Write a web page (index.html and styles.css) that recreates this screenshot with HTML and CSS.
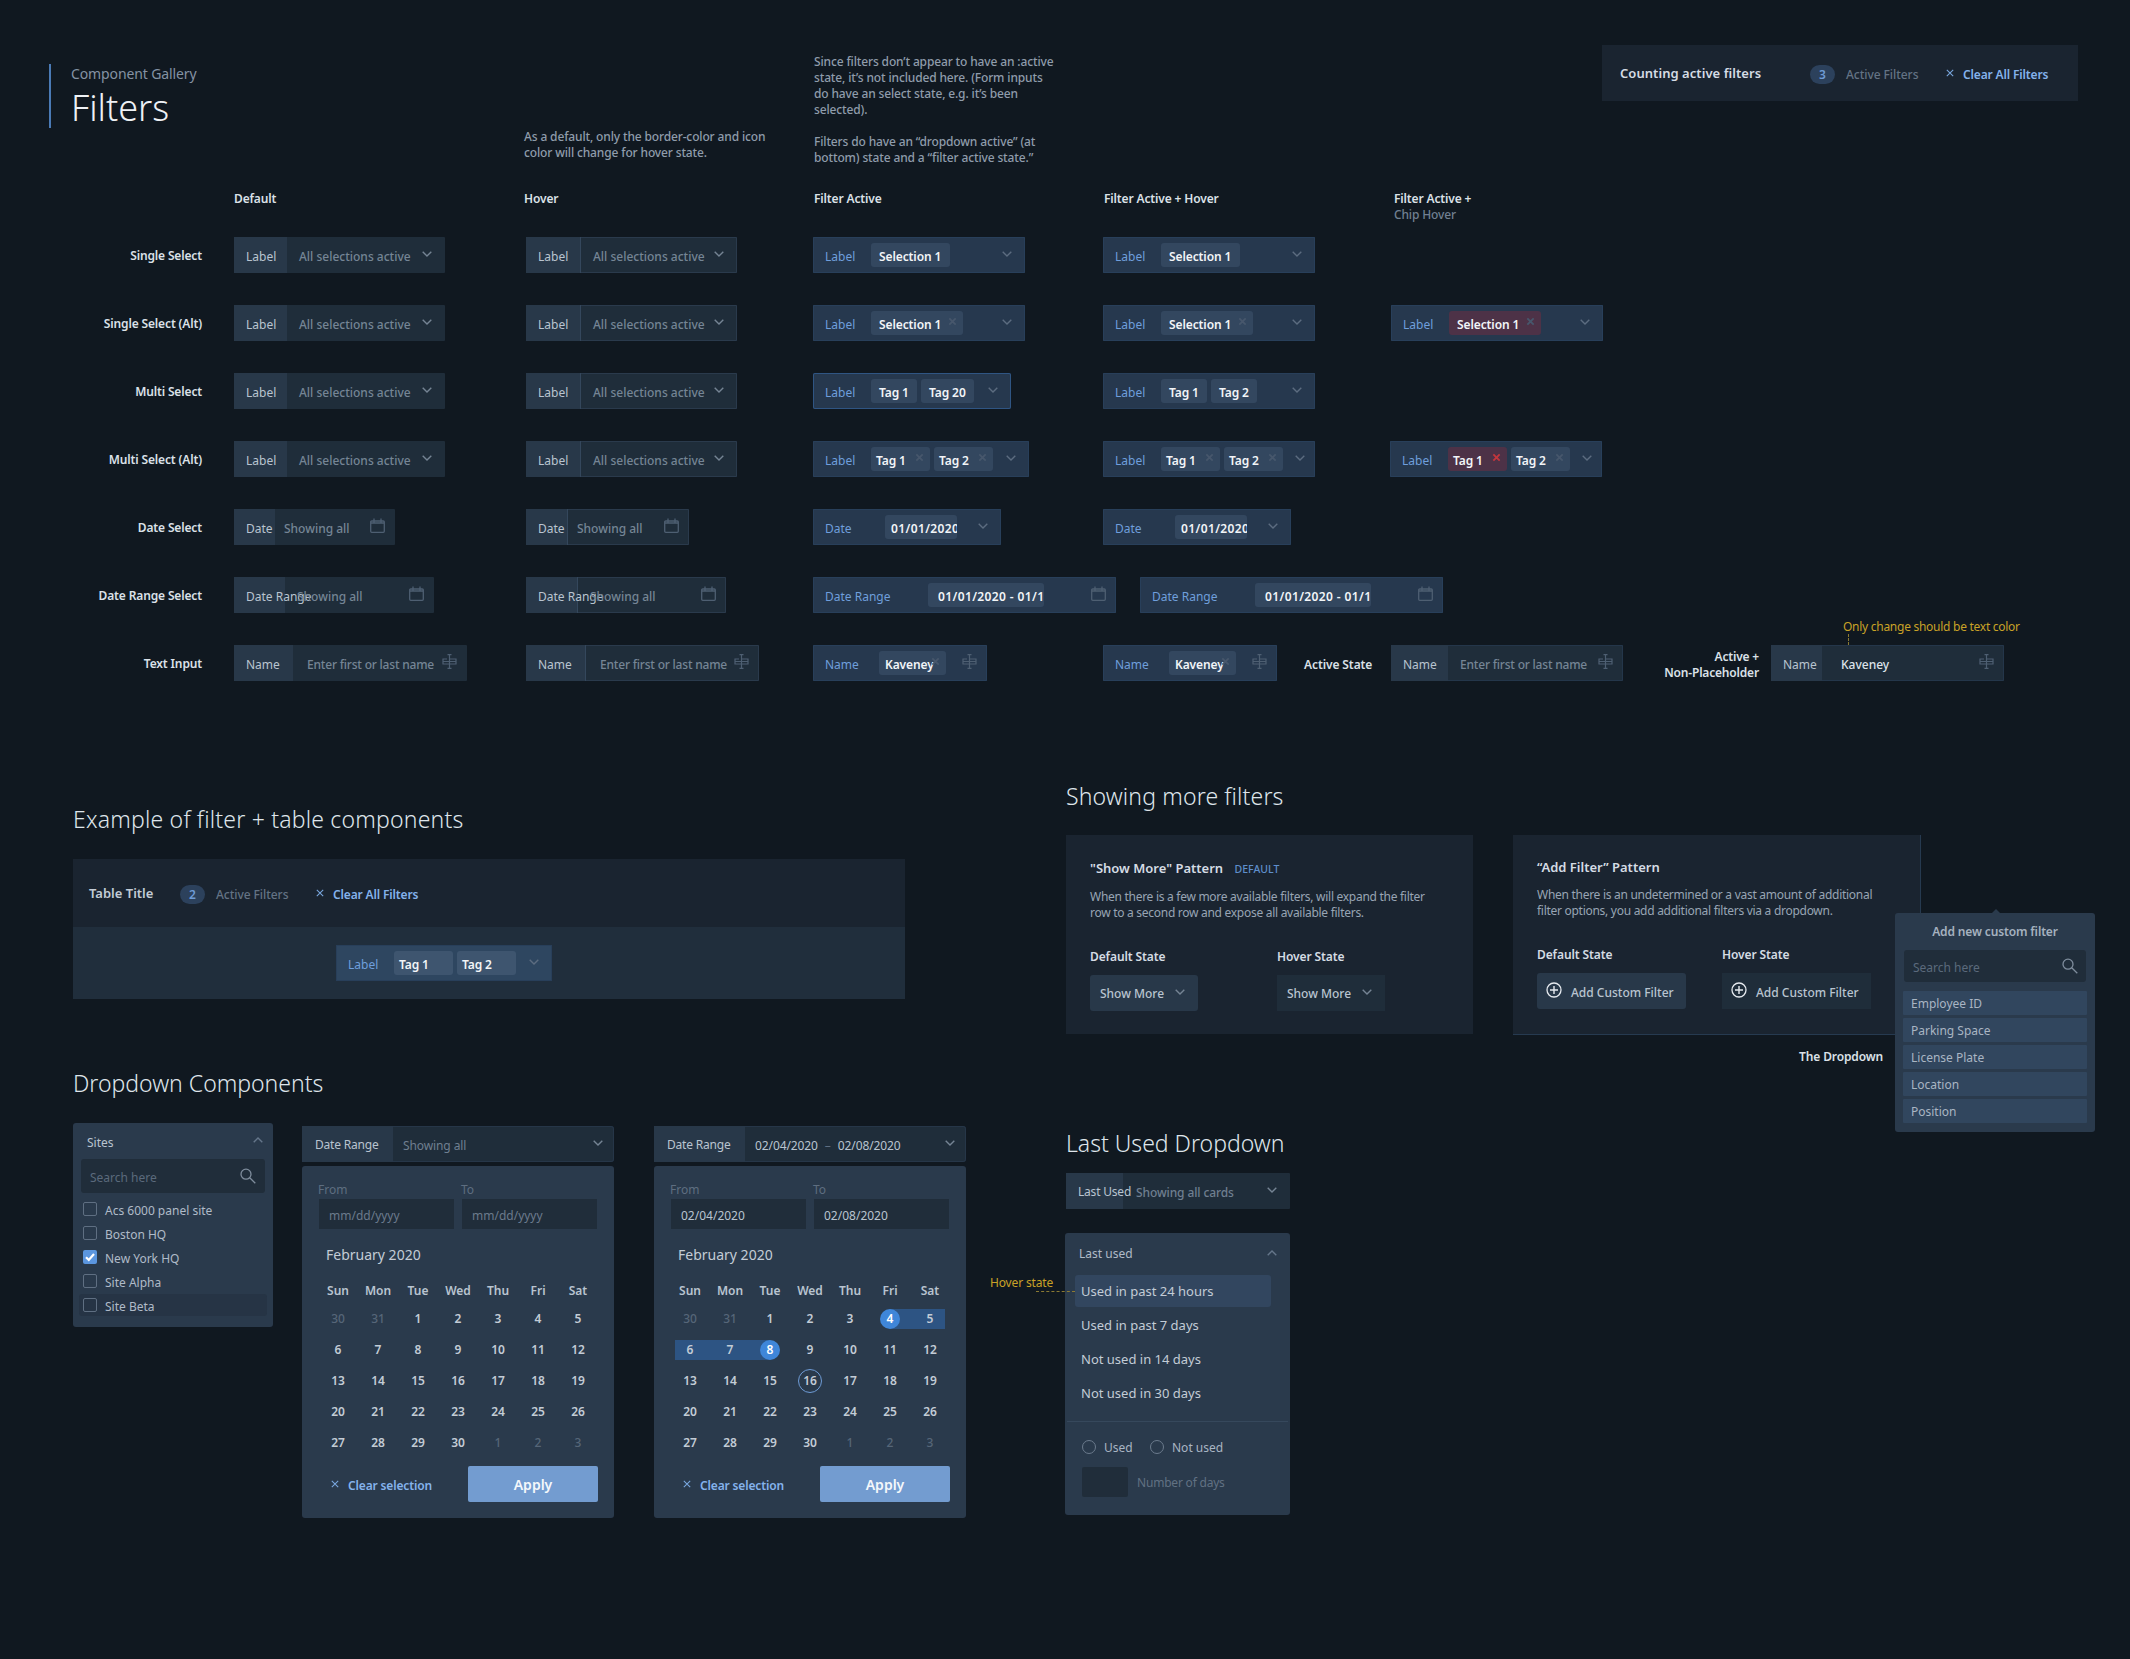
FILE: index.html
```html
<!DOCTYPE html>
<html lang="en">
<head>
    <meta charset="UTF-8">
    <title>Component Gallery - Filters</title>
    <link rel="stylesheet" href="styles.css">
</head>
<body>
<svg class="sprite" width="0" height="0">
    <symbol id="chev" viewBox="0 0 10 6"><path d="M.7.7 5 5 9.3.7" fill="none" stroke="currentColor" stroke-width="1.4"/></symbol>
    <symbol id="cal" viewBox="0 0 15 15"><path d="M1.7 3h11.6a1 1 0 0 1 1 1v9.3a1 1 0 0 1-1 1H1.7a1 1 0 0 1-1-1V4a1 1 0 0 1 1-1ZM4 .5V5M11 .5V5M.7 5h13.6" fill="none" stroke="currentColor" stroke-width="1.3"/></symbol>
    <symbol id="cursor" viewBox="0 0 15 15"><path d="M5 5h-4v5h13V5H8M7.5.7v13.6M5.5.7h4M5.5 14.3h4M1 7.5h13" fill="none" stroke="currentColor" stroke-width="1.2"/></symbol>
    <symbol id="x" viewBox="0 0 10 10"><path d="M1 1l8 8M9 1l-8 8" fill="none" stroke="currentColor" stroke-width="1.3"/></symbol>
    <symbol id="xbold" viewBox="0 0 10 10"><path d="M1.5 1.5l7 7M8.5 1.5l-7 7" fill="none" stroke="currentColor" stroke-width="2"/></symbol>
    <symbol id="search" viewBox="0 0 16 16"><path d="M10 10l5.3 5.3M11 6.2a5 5 0 1 1-10 0 5 5 0 0 1 10 0Z" fill="none" stroke="currentColor" stroke-width="1.3"/></symbol>
    <symbol id="plus" viewBox="0 0 16 16"><circle cx="8" cy="8" r="7" fill="none" stroke="currentColor" stroke-width="1.3"/><path d="M8 4v8M4 8h8" fill="none" stroke="currentColor" stroke-width="1.4"/></symbol>
    <symbol id="check" viewBox="0 0 12 12"><path d="M2 6.2 4.8 9 10 3" fill="none" stroke="currentColor" stroke-width="2.2"/></symbol>
</svg>

<div class="page">
    <!-- state matrix -->
    <div class="matrix">
        <div class="title-block">
            <div class="gallery-name">Component Gallery</div>
            <h1>Filters</h1>
        </div>
        <p class="note note-hover">As a default, only the border-color and icon<br>color will change for hover state.</p>
        <p class="note note-active">Since filters don’t appear to have an :active<br>state, it’s not included here. (Form inputs<br>do have an select state, e.g. it’s been<br>selected).<br><br>Filters do have an “dropdown active” (at<br>bottom) state and a “filter active state.”</p>
        <div class="count-panel">
            <span class="count-title">Counting active filters</span>
            <span class="badge">3</span>
            <span class="count-text">Active Filters</span>
            <span class="clear-link"><svg class="ico-x"><use href="#x"/></svg>Clear All Filters</span>
        </div>

        <div class="col-head first">Default</div>
        <div class="col-head h-hover">Hover</div>
        <div class="col-head h-active">Filter Active</div>
        <div class="col-head h-active">Filter Active + Hover</div>
        <div class="col-head h-chip">Filter Active +<br><span class="muted">Chip Hover</span></div>

        <div class="row-label">Single Select</div>
        <div class="filter w211"><span class="f-label">Label</span><span class="f-value">All selections active</span><svg class="chev"><use href="#chev"/></svg></div>
        <div class="filter w211 hover"><span class="f-label">Label</span><span class="f-value">All selections active</span><svg class="chev"><use href="#chev"/></svg></div>
        <div class="filter w212 active"><span class="f-label">Label</span><span class="chip p8 w79">Selection 1</span><svg class="chev"><use href="#chev"/></svg></div>
        <div class="filter w212 active"><span class="f-label">Label</span><span class="chip p8 w79">Selection 1</span><svg class="chev"><use href="#chev"/></svg></div>

        <div class="row-label">Single Select (Alt)</div>
        <div class="filter w211"><span class="f-label">Label</span><span class="f-value">All selections active</span><svg class="chev"><use href="#chev"/></svg></div>
        <div class="filter w211 hover"><span class="f-label">Label</span><span class="f-value">All selections active</span><svg class="chev"><use href="#chev"/></svg></div>
        <div class="filter w212 active"><span class="f-label">Label</span><span class="chip p8 w92">Selection 1<svg class="chip-x"><use href="#xbold"/></svg></span><svg class="chev"><use href="#chev"/></svg></div>
        <div class="filter w212 active"><span class="f-label">Label</span><span class="chip p8 w92">Selection 1<svg class="chip-x"><use href="#xbold"/></svg></span><svg class="chev"><use href="#chev"/></svg></div>
        <div class="filter w212 active"><span class="f-label">Label</span><span class="chip p8 w92 danger">Selection 1<svg class="chip-x"><use href="#xbold"/></svg></span><svg class="chev"><use href="#chev"/></svg></div>

        <div class="row-label">Multi Select</div>
        <div class="filter w211"><span class="f-label">Label</span><span class="f-value">All selections active</span><svg class="chev"><use href="#chev"/></svg></div>
        <div class="filter w211 hover"><span class="f-label">Label</span><span class="f-value">All selections active</span><svg class="chev"><use href="#chev"/></svg></div>
        <div class="filter w198 active outlined"><span class="f-label">Label</span><span class="chip p8 w46">Tag 1</span><span class="chip p8 w53">Tag 20</span><svg class="chev"><use href="#chev"/></svg></div>
        <div class="filter w212 active"><span class="f-label">Label</span><span class="chip p8 w46">Tag 1</span><span class="chip p8 w46">Tag 2</span><svg class="chev"><use href="#chev"/></svg></div>

        <div class="row-label">Multi Select (Alt)</div>
        <div class="filter w211"><span class="f-label">Label</span><span class="f-value">All selections active</span><svg class="chev"><use href="#chev"/></svg></div>
        <div class="filter w211 hover"><span class="f-label">Label</span><span class="f-value">All selections active</span><svg class="chev"><use href="#chev"/></svg></div>
        <div class="filter w216 active"><span class="f-label">Label</span><span class="chip p5 w59">Tag 1<svg class="chip-x"><use href="#xbold"/></svg></span><span class="chip p5 w59">Tag 2<svg class="chip-x"><use href="#xbold"/></svg></span><svg class="chev"><use href="#chev"/></svg></div>
        <div class="filter w212 active"><span class="f-label">Label</span><span class="chip p5 w59">Tag 1<svg class="chip-x"><use href="#xbold"/></svg></span><span class="chip p5 w59">Tag 2<svg class="chip-x"><use href="#xbold"/></svg></span><svg class="chev near"><use href="#chev"/></svg></div>
        <div class="filter w212 active shift"><span class="f-label">Label</span><span class="chip p5 w59 danger">Tag 1<svg class="chip-x red"><use href="#xbold"/></svg></span><span class="chip p5 w59">Tag 2<svg class="chip-x"><use href="#xbold"/></svg></span><svg class="chev near"><use href="#chev"/></svg></div>

        <div class="row-label">Date Select</div>
        <div class="filter w161 date"><span class="f-label">Date</span><span class="f-value">Showing all</span><svg class="ico-cal"><use href="#cal"/></svg></div>
        <div class="filter w163 date hover"><span class="f-label">Date</span><span class="f-value">Showing all</span><svg class="ico-cal"><use href="#cal"/></svg></div>
        <div class="filter w188 date active"><span class="f-label">Date</span><span class="chip p6 w72">01/01/2020</span><svg class="chev"><use href="#chev"/></svg></div>
        <div class="filter w188 date active"><span class="f-label">Date</span><span class="chip p6 w72">01/01/2020</span><svg class="chev"><use href="#chev"/></svg></div>

        <div class="row-label">Date Range Select</div>
        <div class="filter w200 range"><span class="f-label">Date Range</span><span class="f-value">Showing all</span><svg class="ico-cal"><use href="#cal"/></svg></div>
        <div class="filter w200 range hover"><span class="f-label">Date Range</span><span class="f-value">Showing all</span><svg class="ico-cal"><use href="#cal"/></svg></div>
        <div class="filter w303 range active"><span class="f-label">Date Range</span><span class="chip p10 w116">01/01/2020 - 01/14/2020</span><svg class="ico-cal"><use href="#cal"/></svg></div>
        <div class="filter w303 range active push"><span class="f-label">Date Range</span><span class="chip p10 w116">01/01/2020 - 01/14/2020</span><svg class="ico-cal"><use href="#cal"/></svg></div>

        <div class="row-label">Text Input</div>
        <div class="filter w233 text"><span class="f-label">Name</span><span class="f-value">Enter first or last name</span><svg class="ico-cursor"><use href="#cursor"/></svg></div>
        <div class="filter w233 text hover"><span class="f-label">Name</span><span class="f-value">Enter first or last name</span><svg class="ico-cursor"><use href="#cursor"/></svg></div>
        <div class="filter w174 text active"><span class="f-label">Name</span><span class="chip p6 w67">Kaveney<svg class="chip-x"><use href="#xbold"/></svg></span><svg class="ico-cursor"><use href="#cursor"/></svg></div>
        <div class="state-cell">
            <div class="filter w174 text active"><span class="f-label">Name</span><span class="chip p6 w67">Kaveney<svg class="chip-x"><use href="#xbold"/></svg></span><svg class="ico-cursor"><use href="#cursor"/></svg></div>
            <span class="state-name">Active State</span>
        </div>
        <div class="filter w232 text focus"><span class="f-label">Name</span><span class="f-value">Enter first or last name</span><svg class="ico-cursor"><use href="#cursor"/></svg></div>
        <div class="state-cell">
            <span class="state-name wide">Active +<br>Non-Placeholder</span>
            <div class="filter w233 text focus filled">
                <span class="callout">Only change should be text color</span>
                <span class="f-label">Name</span><span class="f-value">Kaveney</span><svg class="ico-cursor"><use href="#cursor"/></svg>
            </div>
        </div>
    </div>

    <div class="lower">
        <div class="lower-left">
            <h2 class="first-left">Example of filter + table components</h2>
            <div class="table-demo">
                <div class="table-head">
                    <span class="table-title">Table Title</span>
                    <span class="badge">2</span>
                    <span class="count-text">Active Filters</span>
                    <span class="clear-link"><svg class="ico-x"><use href="#x"/></svg>Clear All Filters</span>
                </div>
                <div class="table-filters">
                    <div class="filter w216 active on-table"><span class="f-label">Label</span><span class="chip p5 w59">Tag 1</span><span class="chip p5 w59">Tag 2</span><svg class="chev"><use href="#chev"/></svg></div>
                </div>
            </div>

            <h2 class="second-left">Dropdown Components</h2>
            <div class="dropdowns">
                <div class="sites">
                    <div class="sites-head"><span>Sites</span><svg class="chev up"><use href="#chev"/></svg></div>
                    <div class="search-box"><span>Search here</span><svg class="ico-search"><use href="#search"/></svg></div>
                    <div class="site-row"><span class="checkbox"></span>Acs 6000 panel site</div>
                    <div class="site-row"><span class="checkbox"></span>Boston HQ</div>
                    <div class="site-row"><span class="checkbox checked"><svg><use href="#check"/></svg></span>New York HQ</div>
                    <div class="site-row"><span class="checkbox"></span>Site Alpha</div>
                    <div class="site-row over"><span class="checkbox"></span>Site Beta</div>
                </div>

                <div class="date-drop">
                    <div class="trigger"><span class="trigger-label">Date Range</span><span class="trigger-value">Showing all</span><svg class="chev"><use href="#chev"/></svg></div>
                    <div class="calendar">
                        <div class="range-inputs">
                            <div class="range-field"><label>From</label><div class="date-input">mm/dd/yyyy</div></div>
                            <div class="range-field"><label>To</label><div class="date-input">mm/dd/yyyy</div></div>
                        </div>
                        <div class="month">February 2020</div>
                        <div class="days">
                            <b>Sun</b><b>Mon</b><b>Tue</b><b>Wed</b><b>Thu</b><b>Fri</b><b>Sat</b>
                            <span class="off">30</span><span class="off">31</span><span>1</span><span>2</span><span>3</span><span>4</span><span>5</span>
                            <span>6</span><span>7</span><span>8</span><span>9</span><span>10</span><span>11</span><span>12</span>
                            <span>13</span><span>14</span><span>15</span><span>16</span><span>17</span><span>18</span><span>19</span>
                            <span>20</span><span>21</span><span>22</span><span>23</span><span>24</span><span>25</span><span>26</span>
                            <span>27</span><span>28</span><span>29</span><span>30</span><span class="off">1</span><span class="off">2</span><span class="off">3</span>
                        </div>
                        <div class="cal-foot">
                            <span class="clear-link"><svg class="ico-x"><use href="#x"/></svg>Clear selection</span>
                            <button class="apply">Apply</button>
                        </div>
                    </div>
                </div>

                <div class="date-drop">
                    <div class="trigger"><span class="trigger-label">Date Range</span><span class="trigger-value filled">02/04/2020<i>–</i>02/08/2020</span><svg class="chev"><use href="#chev"/></svg></div>
                    <div class="calendar">
                        <div class="range-inputs">
                            <div class="range-field"><label>From</label><div class="date-input filled">02/04/2020</div></div>
                            <div class="range-field"><label>To</label><div class="date-input filled">02/08/2020</div></div>
                        </div>
                        <div class="month">February 2020</div>
                        <div class="days">
                            <b>Sun</b><b>Mon</b><b>Tue</b><b>Wed</b><b>Thu</b><b>Fri</b><b>Sat</b>
                            <span class="off">30</span><span class="off">31</span><span>1</span><span>2</span><span>3</span><span class="from"><em>4</em></span><span class="band-end">5</span>
                            <span class="band-start">6</span><span class="band">7</span><span class="to"><em>8</em></span><span>9</span><span>10</span><span>11</span><span>12</span>
                            <span>13</span><span>14</span><span>15</span><span class="today"><em>16</em></span><span>17</span><span>18</span><span>19</span>
                            <span>20</span><span>21</span><span>22</span><span>23</span><span>24</span><span>25</span><span>26</span>
                            <span>27</span><span>28</span><span>29</span><span>30</span><span class="off">1</span><span class="off">2</span><span class="off">3</span>
                        </div>
                        <div class="cal-foot">
                            <span class="clear-link"><svg class="ico-x"><use href="#x"/></svg>Clear selection</span>
                            <button class="apply">Apply</button>
                        </div>
                    </div>
                </div>
            </div>
        </div>

        <div class="lower-right">
            <h2 class="more-title">Showing more filters</h2>
            <div class="pattern-row">
                <div class="pattern">
                    <h3>"Show More" Pattern <span class="tag-default">DEFAULT</span></h3>
                    <p>When there is a few more available filters, will expand the filter<br>row to a second row and expose all available filters.</p>
                    <div class="states">
                        <div class="state-col"><div class="state-title">Default State</div><div class="more-btn"><span>Show More</span><svg class="chev"><use href="#chev"/></svg></div></div>
                        <div class="state-col"><div class="state-title">Hover State</div><div class="more-btn square"><span>Show More</span><svg class="chev"><use href="#chev"/></svg></div></div>
                    </div>
                </div>
                <div class="pattern add">
                    <h3>“Add Filter” Pattern</h3>
                    <p>When there is an undetermined or a vast amount of additional<br>filter options, you add additional filters via a dropdown.</p>
                    <div class="states">
                        <div class="state-col"><div class="state-title">Default State</div><div class="add-btn"><svg class="ico-plus"><use href="#plus"/></svg>Add Custom Filter</div></div>
                        <div class="state-col"><div class="state-title">Hover State</div><div class="add-btn square"><svg class="ico-plus"><use href="#plus"/></svg>Add Custom Filter</div></div>
                    </div>
                    <span class="dropdown-name">The Dropdown</span>
                    <div class="add-menu">
                        <div class="add-menu-title">Add new custom filter</div>
                        <div class="search-box"><span>Search here</span><svg class="ico-search"><use href="#search"/></svg></div>
                        <div class="add-item">Employee ID</div>
                        <div class="add-item">Parking Space</div>
                        <div class="add-item">License Plate</div>
                        <div class="add-item">Location</div>
                        <div class="add-item">Position</div>
                    </div>
                </div>
            </div>

            <h2 class="last-used-title">Last Used Dropdown</h2>
            <div class="trigger last"><span class="trigger-label">Last Used</span><span class="trigger-value">Showing all cards</span><svg class="chev"><use href="#chev"/></svg></div>
            <div class="last-panel">
                <span class="hover-note">Hover state</span>
                <div class="last-head"><span>Last used</span><svg class="chev up"><use href="#chev"/></svg></div>
                <div class="last-item over">Used in past 24 hours</div>
                <div class="last-item">Used in past 7 days</div>
                <div class="last-item">Not used in 14 days</div>
                <div class="last-item">Not used in 30 days</div>
                <div class="last-foot">
                    <div class="radios">
                        <span class="radio"></span><span class="radio-text">Used</span>
                        <span class="radio"></span><span class="radio-text">Not used</span>
                    </div>
                    <div class="days-row"><span class="days-input"></span><span>Number of days</span></div>
                </div>
            </div>
        </div>
    </div>
</div>
</body>
</html>
```

FILE: styles.css
```css
* {
    box-sizing: border-box;
}

body {
    margin: 0;
    background-color: #101820;
    font-family: "Noto Sans", "Liberation Sans", sans-serif;
    font-size: 12px;
    color: #c3ccd6;
}

.sprite {
    position: absolute;
}

.page {
    width: 2130px;
    height: 1659px;
    padding-top: 45px;
    overflow: hidden;
}

/* matrix of states */
.matrix {
    display: grid;
    grid-template-columns: 234px 292px 287px 290px 288px 232px 1fr;
    grid-template-rows: 145px 47px;
    grid-auto-rows: 68px;
    align-items: start;
    justify-items: start;
}

.title-block {
    grid-column: 1 / 3;
    margin: 19px 0 0 49px;
    padding-left: 20px;
    height: 64px;
    border-left: 2px solid #4a7ab5;
}

.gallery-name {
    font-size: 14px;
    line-height: 20px;
    letter-spacing: -.12px;
    color: #8492a3;
}

h1 {
    margin: 3px 0 0;
    font-size: 36px;
    line-height: 42px;
    font-weight: 300;
    color: #eef1f5;
}

.note {
    margin: 0;
    font-size: 12px;
    line-height: 16px;
    font-weight: 500;
    letter-spacing: -.14px;
    color: #8f9cab;
    white-space: nowrap;
}

.note-hover {
    margin: 84px 0 0 -2px;
}

.note-active {
    margin: 9px 0 0 1px;
}

.count-panel {
    grid-column: 6 / 8;
    justify-self: end;
    margin-right: 52px;
    width: 476px;
    height: 56px;
    padding-left: 18px;
    display: flex;
    align-items: center;
    background-color: #1a2430;
}

.count-title {
    width: 190px;
    font-size: 13px;
    font-weight: 600;
    letter-spacing: .05px;
    color: #d5dce4;
    margin-top: -1px;
}

.badge {
    width: 25px;
    height: 19px;
    margin-top: 2px;
    border-radius: 10px;
    background-color: #2c415c;
    color: #6e9bd5;
    font-weight: 600;
    line-height: 19px;
    text-align: center;
}

.count-text {
    margin: 2px 0 0 11px;
    width: 100px;
    color: #647384;
    font-weight: 500;
    letter-spacing: -.05px;
    white-space: nowrap;
}

.clear-link {
    display: flex;
    align-items: center;
    margin-top: 2px;
    color: #85b3ec;
    font-weight: 600;
    letter-spacing: -.14px;
    white-space: nowrap;
}

.ico-x {
    width: 8px;
    height: 8px;
    margin: -2px 9px 0 0;
    color: #7aa8e0;
}

.col-head {
    margin-top: 1px;
    font-size: 12px;
    line-height: 16px;
    font-weight: 600;
    letter-spacing: -.14px;
    color: #dbe1e8;
    white-space: nowrap;
}

.col-head.first {
    grid-column: 2;
}

.h-hover { margin-left: -2px; }
.h-active { margin-left: 1px; }
.h-chip { margin-left: 3px; }

.muted {
    color: #718092;
    font-weight: 500;
}

.row-label {
    grid-column: 1;
    justify-self: end;
    height: 36px;
    margin-right: 32px;
    font-size: 12px;
    font-weight: 600;
    line-height: 38px;
    letter-spacing: -.14px;
    color: #dbe1e8;
    white-space: nowrap;
}

/* filter bar */
.filter {
    position: relative;
    display: flex;
    align-items: center;
    height: 36px;
    border-radius: 1px;
    background-color: #1f2d3a;
    white-space: nowrap;
}

.f-label {
    flex: none;
    width: 53px;
    height: 100%;
    padding: 3px 0 0 12px;
    line-height: 34px;
    background-color: #283849;
    color: #b9c4d0;
}

.f-value {
    flex: 1;
    padding: 3px 0 0 12px;
    color: #758595;
    font-weight: 500;
}

.date .f-label { width: 41px; }
.date .f-value { padding-left: 9px; }
.range .f-label { width: 51px; }
.text .f-label { width: 59px; }
.text .f-value {
    padding-left: 14px;
    letter-spacing: -.2px;
}

.hover {
    box-shadow: inset 0 0 0 1px #2a3a4c;
}

.hover .f-label {
    width: 55px;
    border-right: 1px solid #34475c;
}

.hover.date .f-label { width: 42px; }
.hover.range .f-label { width: 52px; }
.hover.text .f-label { width: 60px; }

.active {
    background-color: #26384e;
    box-shadow: inset 0 0 0 1px #283f5a;
}

.active.outlined {
    box-shadow: inset 0 0 0 1px #2f5583;
    border-radius: 2px;
}

.active .f-label {
    width: 58px;
    background: none;
    color: #6f9fdc;
}

.active.date .f-label { width: 72px; }
.active.range .f-label { width: 115px; }
.active.text .f-label { width: 66px; }

.focus {
    box-shadow: inset 0 0 0 1px #24364a;
}

.focus .f-label { width: 57px; }
.focus .f-value { padding-left: 12px; }

.filled .f-label { width: 51px; }
.filled .f-value {
    padding-left: 19px;
    letter-spacing: 0;
    color: #dde3ea;
}

.shift {
    margin-left: -1px;
}

.push {
    margin-left: 37px;
}

.chip {
    position: relative;
    flex: none;
    height: 24px;
    margin-right: 4px;
    border-radius: 3px;
    background-color: #33475f;
    color: #f2f5f8;
    font-weight: 600;
    letter-spacing: -.1px;
    line-height: 27px;
    overflow: hidden;
}

.date .chip,
.range .chip {
    letter-spacing: .38px;
}

.chip.danger {
    background-color: #4d3247;
}

.p5 { padding-left: 5px; }
.p6 { padding-left: 6px; }
.p8 { padding-left: 8px; }
.p10 { padding-left: 10px; }

.w46 { width: 46px; }
.w53 { width: 53px; }
.w59 { width: 59px; }
.w67 { width: 67px; }
.w72 { width: 72px; }
.w79 { width: 79px; }
.w92 { width: 92px; }
.w116 { width: 116px; }
.w161 { width: 161px; }
.w163 { width: 163px; }
.w174 { width: 174px; }
.w188 { width: 188px; }
.w198 { width: 198px; }
.w200 { width: 200px; }
.w211 { width: 211px; }
.w212 { width: 212px; }
.w216 { width: 216px; }
.w232 { width: 232px; }
.w233 { width: 233px; }
.w303 { width: 303px; }

.chip-x {
    position: absolute;
    top: 6px;
    right: 6px;
    width: 9px;
    height: 9px;
    color: #47576c;
}

.chip-x.red {
    color: #c2363d;
}

.chev {
    flex: none;
    width: 10px;
    height: 6px;
    margin: -2px 13px 0 auto;
    color: #758494;
}

.active .chev {
    color: #5c6c80;
}

.chev.near {
    margin-right: 10px;
}

.chev.up {
    transform: rotate(180deg);
}

.ico-cal {
    flex: none;
    width: 15px;
    height: 15px;
    margin: -3px 10px 0 auto;
    color: #4e5f72;
}

.ico-cursor {
    flex: none;
    width: 15px;
    height: 15px;
    margin: -3px 10px 0 auto;
    color: #4e5f72;
}

.state-cell {
    display: flex;
    align-items: center;
    height: 36px;
}

.state-name {
    margin: 2px 0 0 27px;
    font-weight: 600;
    letter-spacing: -.1px;
    color: #dbe1e8;
    white-space: nowrap;
}

.state-name.wide {
    width: 136px;
    margin: 3px 12px 0 0;
    line-height: 16px;
    letter-spacing: -.18px;
    text-align: right;
}

.callout {
    position: absolute;
    top: -26px;
    left: 72px;
    color: #c9a227;
    line-height: 16px;
    letter-spacing: -.27px;
}

.callout::after {
    content: "";
    position: absolute;
    left: 5px;
    top: 15px;
    height: 11px;
    border-left: 1px dashed #8b7a33;
}

/* lower half */
.lower {
    display: flex;
    margin-top: 68px;
    padding-left: 73px;
}

.lower-left {
    width: 993px;
    flex: none;
}

h2 {
    margin: 0;
    font-size: 23px;
    line-height: 30px;
    font-weight: 300;
    color: #dfe5eb;
}

.first-left {
    margin-top: 23px;
    letter-spacing: .2px;
}

.more-title {
    letter-spacing: .14px;
}

.second-left {
    margin-top: 69px;
}

.table-demo {
    margin-top: 25px;
    width: 832px;
}

.table-head {
    display: flex;
    align-items: center;
    height: 68px;
    padding-left: 16px;
    background-color: #1a2430;
}

.table-title {
    width: 91px;
    margin-top: -1px;
    font-size: 13px;
    font-weight: 600;
    color: #c3ccd6;
}

.table-head .count-text {
    width: 100px;
}

.table-filters {
    display: flex;
    align-items: center;
    height: 72px;
    padding-left: 263px;
    background-color: #202e3c;
}

.on-table {
    background-color: #2e4660;
}

.on-table .f-label {
    padding-left: 12px;
}

.on-table .chip {
    background-color: #3e556f;
}

.dropdowns {
    display: flex;
    align-items: flex-start;
    margin-top: 25px;
}

.sites {
    width: 200px;
    height: 204px;
    padding: 0 8px;
    border-radius: 3px;
    background-color: #2a3a4c;
    margin-right: 29px;
}

.sites-head {
    display: flex;
    align-items: center;
    height: 36px;
    padding: 2px 0 0 6px;
    color: #b9c4d0;
}

.sites-head .chev,
.last-head .chev {
    margin: -4px 2px 0 auto;
    color: #65768a;
}

.search-box {
    display: flex;
    align-items: center;
    justify-content: space-between;
    height: 34px;
    padding: 2px 9px 0 9px;
    border-radius: 3px;
    background-color: #202d3a;
    color: #5b6a7c;
}

.ico-search {
    width: 16px;
    height: 16px;
    margin-top: -2px;
    color: #7f8d9d;
}

.site-row {
    display: flex;
    align-items: center;
    height: 24px;
    margin-left: -2px;
    padding: 2px 0 0 4px;
    border-radius: 3px;
    color: #b0bbc8;
}

.site-row:nth-child(3) {
    margin-top: 4px;
}

.site-row.over {
    height: 22px;
    margin: 1px -2px 0;
    background-color: #263445;
}

.checkbox {
    width: 14px;
    height: 14px;
    margin: -3px 8px 0 0;
    border: 1px solid #5f6f82;
    border-radius: 2px;
}

.checkbox.checked {
    border: 0;
    background-color: #5b96df;
    color: #fff;
}

.checkbox svg {
    display: block;
    width: 14px;
    height: 14px;
    padding: 1px;
}

.date-drop {
    width: 312px;
    margin: 3px 40px 0 0;
}

.trigger {
    display: flex;
    align-items: center;
    height: 36px;
    border-radius: 3px;
    background-color: #1f2d3a;
    box-shadow: inset 0 0 0 1px #263648;
}

.trigger .chev {
    margin-right: 11px;
}

.trigger-label {
    flex: none;
    width: 91px;
    height: 100%;
    padding-left: 13px;
    line-height: 38px;
    letter-spacing: -.2px;
    background-color: #283849;
    color: #b9c4d0;
    white-space: nowrap;
}

.trigger-value {
    padding: 2px 0 0 10px;
    letter-spacing: -.1px;
    color: #6f7f90;
    white-space: nowrap;
}

.trigger-value.filled {
    color: #b9c4d0;
}

.trigger-value i {
    margin: 0 7px;
    color: #5f6f82;
    font-style: normal;
}

.calendar {
    height: 352px;
    margin-top: 4px;
    padding: 15px 16px 16px;
    border-radius: 3px;
    background-color: #2a3a4c;
}

.range-inputs {
    display: flex;
    gap: 8px;
    padding-left: 1px;
}

.range-field label {
    display: block;
    height: 16px;
    margin: 0 0 2px -1px;
    color: #5e6e80;
}

.date-input {
    width: 135px;
    height: 30px;
    padding-left: 10px;
    line-height: 33px;
    background-color: #202d3a;
    color: #6b7a8c;
}

.date-input.filled {
    color: #b9c4d0;
}

.month {
    height: 20px;
    margin: 16px 0 0 8px;
    font-size: 14px;
    line-height: 20px;
    color: #c3ccd6;
}

.days {
    display: grid;
    grid-template-columns: repeat(7, 40px);
    grid-template-rows: 26px;
    grid-auto-rows: 31px;
    margin-top: 12px;
    text-align: center;
}

.days b {
    line-height: 28px;
    font-weight: 600;
    color: #b9c4d0;
}

.days span {
    display: flex;
    align-items: center;
    justify-content: center;
    font-weight: 600;
    color: #c3ccd6;
}

.days span.off {
    color: #566678;
    font-weight: 500;
}

.days em {
    display: block;
    width: 20px;
    height: 20px;
    border-radius: 50%;
    background-color: #3f86d9;
    color: #fff;
    font-style: normal;
    line-height: 20px;
}

.band,
.band-start,
.band-end,
.from,
.to {
    background: linear-gradient(#2d5483, #2d5483) no-repeat;
}

.band { background-size: 100% 20px; background-position: center; }
.band-start { background-size: 35px 20px; background-position: right center; }
.band-end { background-size: 35px 20px; background-position: left center; }
.from { background-size: 20px 20px; background-position: right center; }
.to { background-size: 20px 20px; background-position: left center; }

.days .today em {
    width: 24px;
    height: 24px;
    background: none;
    border: 1px solid #6e9bd5;
    color: #c3ccd6;
    line-height: 22px;
}

.cal-foot {
    display: flex;
    align-items: center;
    justify-content: space-between;
    margin-top: 8px;
    padding-left: 13px;
}

.apply {
    width: 130px;
    height: 36px;
    border: 0;
    border-radius: 2px;
    background-color: #739cd0;
    color: #f5f8fb;
    font: 600 14px "Noto Sans", "Liberation Sans", sans-serif;
}

/* right column */
.lower-right {
    flex: 1;
}

.pattern-row {
    display: flex;
    gap: 40px;
    margin-top: 24px;
}

.pattern {
    position: relative;
    width: 407px;
    height: 199px;
    padding: 23px 24px 0;
    background-color: #1a2430;
}

.pattern.add {
    width: 408px;
    height: 200px;
    padding-top: 22px;
    border-right: 1px solid #263a50;
    border-bottom: 1px solid #263a50;
}

h3 {
    margin: 0;
    font-size: 13px;
    line-height: 20px;
    font-weight: 600;
    color: #d5dce4;
}

.tag-default {
    margin-left: 8px;
    font-size: 10.5px;
    font-weight: 500;
    color: #5f8fcb;
}

.pattern p {
    margin: 10px 0 0;
    font-size: 12px;
    line-height: 16px;
    letter-spacing: -.28px;
    color: #98a5b4;
    white-space: nowrap;
}

.states {
    display: flex;
    margin-top: 28px;
}

.state-col {
    flex: none;
    width: 187px;
}

.pattern.add .state-col {
    width: 185px;
}

.state-title {
    height: 26px;
    font-weight: 600;
    line-height: 16px;
    letter-spacing: -.1px;
    color: #d5dce4;
}

.more-btn,
.add-btn {
    display: flex;
    align-items: center;
    height: 36px;
    border-radius: 3px;
    background-color: #283849;
    font-weight: 500;
    color: #b9c4d0;
    white-space: nowrap;
}

.more-btn {
    width: 108px;
    padding: 1px 0 0 10px;
}

.more-btn .chev {
    margin: -3px 13px 0 auto;
}

.add-btn {
    width: 149px;
    padding: 3px 0 0 9px;
}

.square {
    border-radius: 0;
    background-color: #1f2d3a;
}

.ico-plus {
    width: 16px;
    height: 16px;
    margin: -5px 9px 0 0;
    color: #e6eaef;
}

.dropdown-name {
    position: absolute;
    top: 213px;
    right: 37px;
    font-weight: 600;
    letter-spacing: -.14px;
    color: #dbe1e8;
    white-space: nowrap;
}

.add-menu {
    position: absolute;
    top: 78px;
    left: 382px;
    width: 200px;
    height: 219px;
    padding: 0 8px 0 8px;
    border-radius: 3px;
    background-color: #2a3a4c;
}

.add-menu::before {
    content: "";
    position: absolute;
    top: -4px;
    left: 96px;
    border: 5px solid transparent;
    border-top: 0;
    border-bottom-color: #2a3a4c;
}

.add-menu-title {
    height: 37px;
    font-weight: 600;
    line-height: 38px;
    letter-spacing: -.14px;
    text-align: center;
    color: #a5b1bf;
}

.add-menu .search-box {
    height: 32px;
    margin: 0 1px 9px;
    padding-right: 8px;
}

.add-item {
    height: 24px;
    margin-bottom: 3px;
    padding-left: 8px;
    line-height: 26px;
    border-radius: 1px;
    background-color: #31465e;
    color: #a9b5c3;
}

.last-used-title {
    margin-top: 93px;
}

.trigger.last {
    width: 224px;
    margin-top: 15px;
    border-radius: 1px;
    box-shadow: none;
}

.last .trigger-label {
    width: 57px;
    padding-left: 12px;
}

.last .trigger-value {
    margin-left: 0;
    padding-left: 13px;
    font-weight: 500;
}

.last .chev {
    margin: -2px 13px 0 auto;
}

.last-panel {
    position: relative;
    width: 225px;
    height: 282px;
    margin: 24px 0 0 -1px;
    padding: 0 10px;
    border-radius: 3px;
    background-color: #2a3a4c;
}

.hover-note {
    position: absolute;
    top: 41px;
    left: -75px;
    letter-spacing: -.15px;
    color: #c9a227;
    white-space: nowrap;
}

.hover-note::after {
    content: "";
    position: absolute;
    top: 17px;
    left: 46px;
    width: 39px;
    border-top: 1px dashed #8b7a33;
}

.last-head {
    display: flex;
    align-items: center;
    height: 42px;
    padding: 0 0 2px 4px;
    color: #b0bbc8;
}

.last-head .chev {
    margin: 0 3px 0 auto;
}

.last-item {
    width: 196px;
    height: 32px;
    margin-bottom: 2px;
    padding-left: 6px;
    border-radius: 3px;
    font-size: 13px;
    line-height: 32px;
    color: #c3ccd6;
    white-space: nowrap;
}

.last-item.over {
    background-color: #32465f;
}

.last-foot {
    margin: 12px -8px 0;
    padding: 16px 0 0 15px;
    border-top: 1px solid #36485c;
}

.radios {
    display: flex;
    align-items: center;
    height: 18px;
    color: #a9b5c3;
}

.radio {
    width: 14px;
    height: 14px;
    border: 1px solid #6b7a8c;
    border-radius: 50%;
}

.radio-text {
    margin-left: 8px;
    width: 46px;
    white-space: nowrap;
}

.days-row {
    display: flex;
    align-items: center;
    margin-top: 11px;
    letter-spacing: -.2px;
    color: #617183;
}

.days-input {
    width: 46px;
    height: 30px;
    margin-right: 9px;
    border-radius: 2px;
    background-color: #202d3a;
}
```
